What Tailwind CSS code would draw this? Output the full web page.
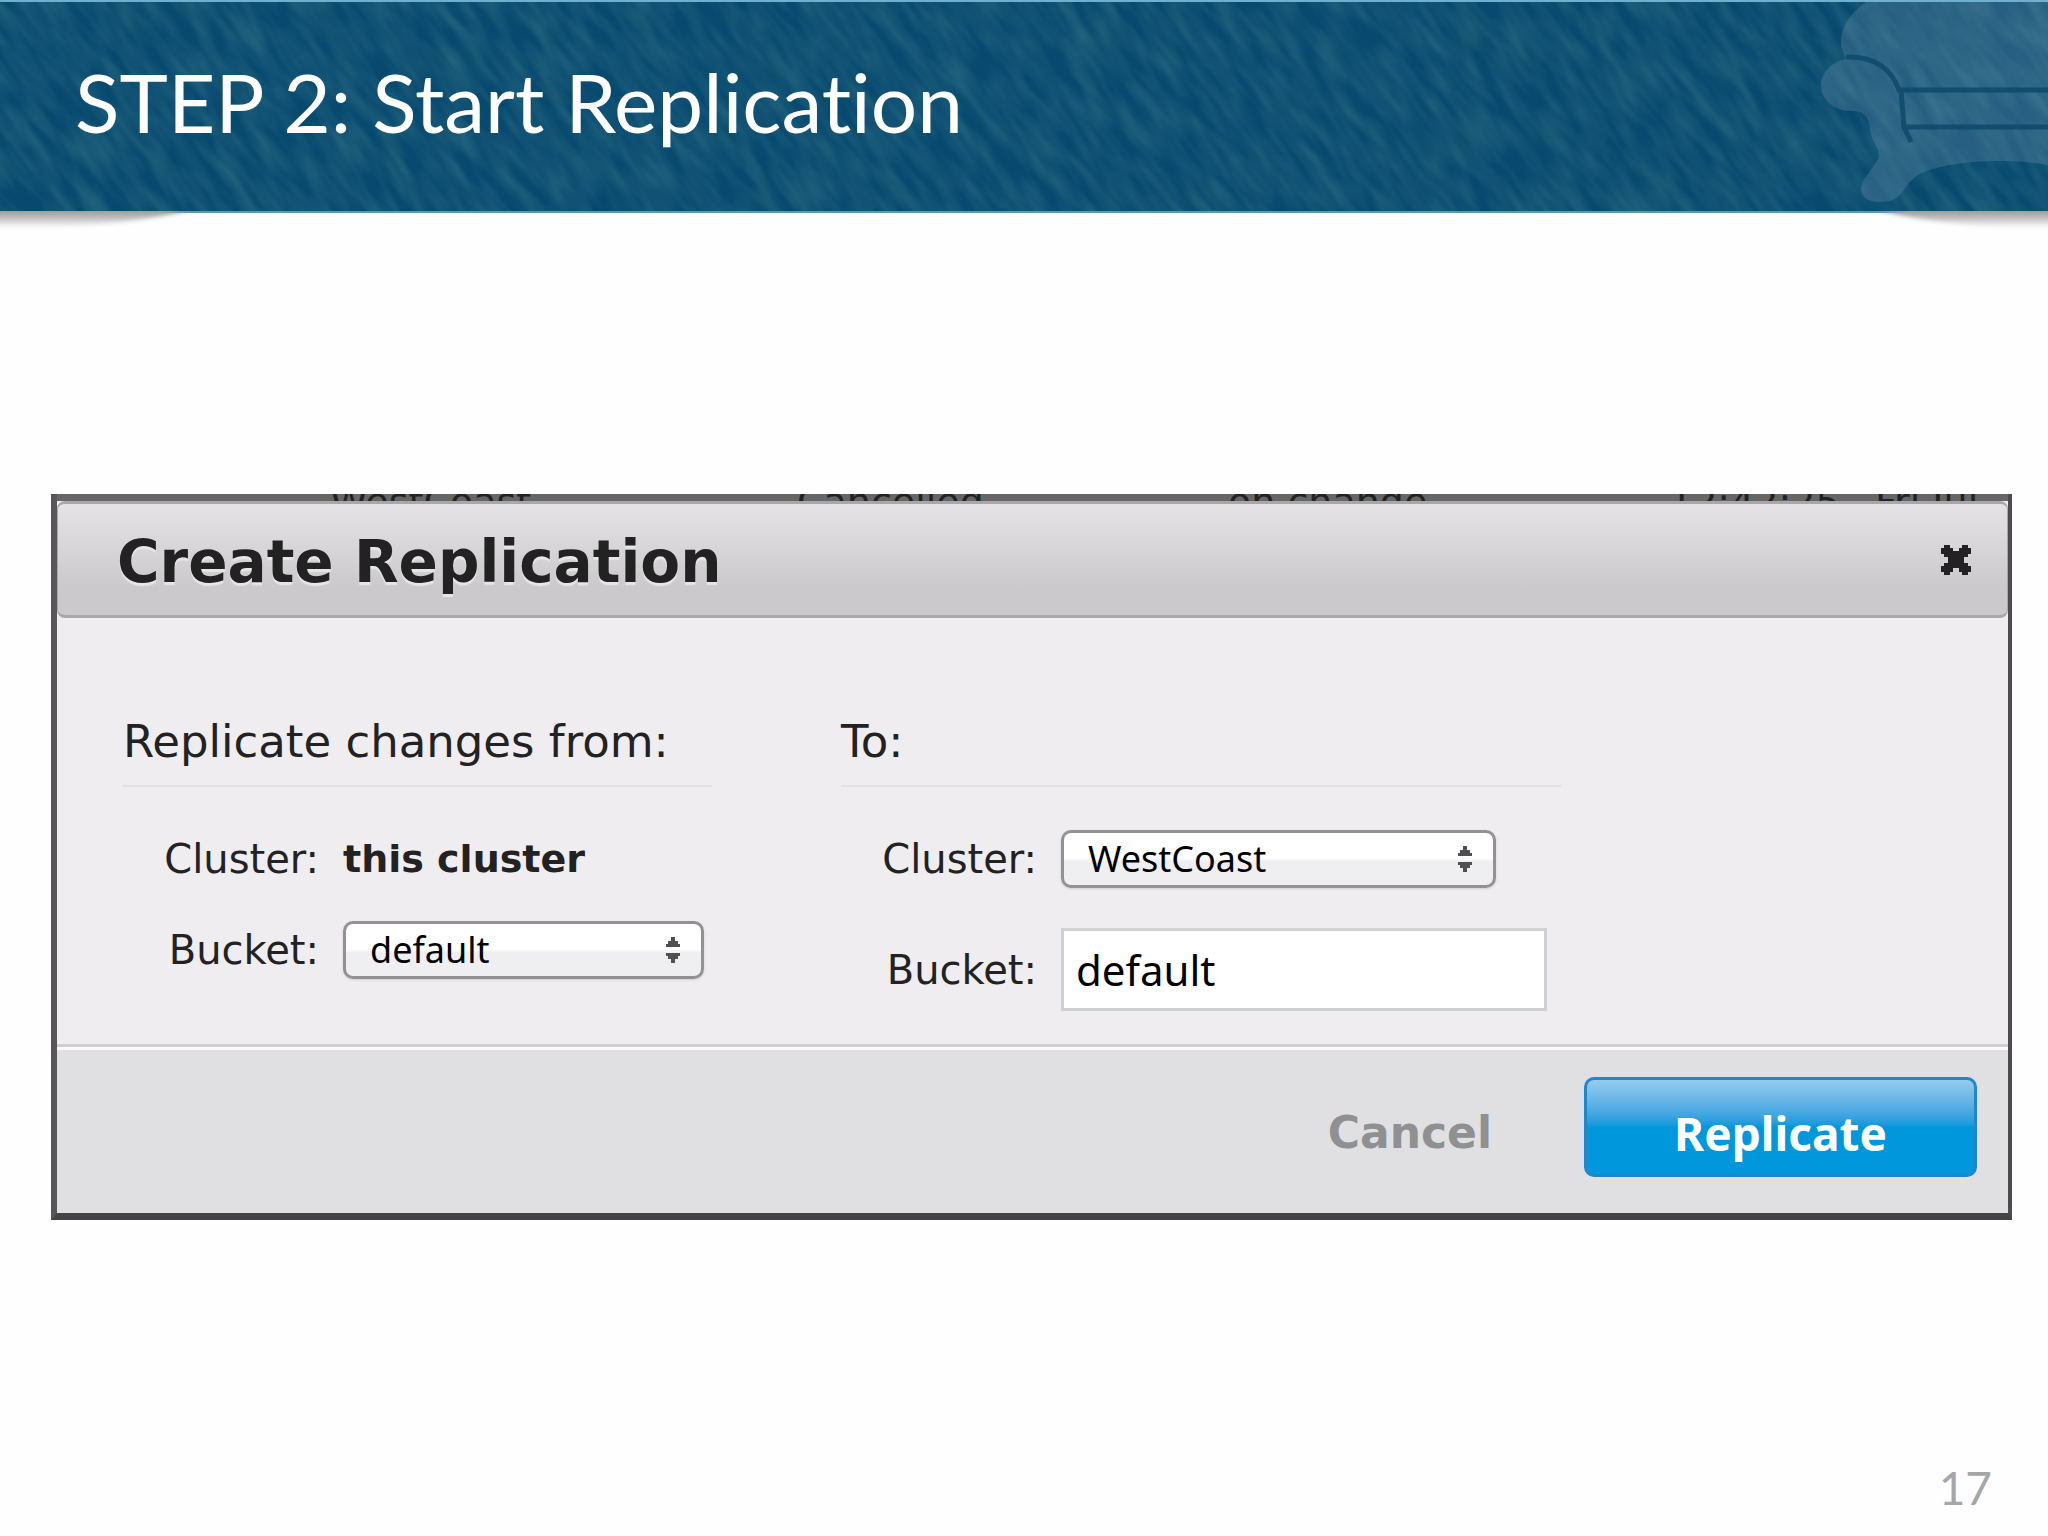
<!DOCTYPE html>
<html lang="en">

<head>
    <meta charset="UTF-8">
    <meta name="viewport" content="width=device-width, initial-scale=1.0">
    <title>STEP 2: Start Replication</title>
    <script src="https://cdn.jsdelivr.net/npm/@tailwindcss/browser@4"></script>
</head>

<body class="flex min-h-screen flex-col bg-[#fefefe] font-['DejaVu_Sans',sans-serif] text-[#222222]">

    <!-- Slide header -->
    <header class="relative flex h-[213px] items-center border-y-2 border-t-[#6fb0d0] border-b-[#5f96b0] bg-[#07496f]">
        <!-- Woven texture -->
        <svg class="absolute inset-0 h-full w-full" aria-hidden="true">
            <filter id="weave" x="0" y="0" width="100%" height="100%" color-interpolation-filters="sRGB">
                <feTurbulence type="fractalNoise" baseFrequency="0.02 0.08" numOctaves="2" seed="4" />
                <feColorMatrix values="0 0 0 0 0.15  0 0 0 0 0.40  0 0 0 0 0.50  1.4 0 0 0 -0.4" />
            </filter>
            <g transform="rotate(54)">
                <rect x="-100" y="-1700" width="1600" height="1900" filter="url(#weave)" />
            </g>
        </svg>
        <!-- Couch logo -->
        <svg class="absolute right-0 top-0 h-full w-[300px]" viewBox="0 0 300 209" preserveAspectRatio="none"
            aria-hidden="true">
            <path fill="#7f9fb8" fill-opacity=".26"
                d="M118 0C98 14 92 30 93 44L98 57C82 60 73 72 73 83C73 98 86 109 103 109C115 108 121 115 122 128C124 140 131 145 131 155C127 166 113 176 113 188C114 198 125 202 142 199C155 196 156 181 172 172C200 158 262 156 300 163V0Z" />
            <path fill="none" stroke="#0a4769" stroke-opacity=".8" stroke-width="5"
                d="M98 55C126 54 143 66 151 88H300M153 88L156 125H300M156 125L163 140" />
        </svg>
        <h1
            class="relative pb-3 pl-[75px] font-[Lato,sans-serif] text-[82px] leading-none text-white [font-variant-ligatures:none]">
            STEP 2: Start Replication</h1>
        <!-- Curled edges -->
        <svg class="absolute left-0 top-full h-6 w-[240px]" viewBox="0 0 240 24" aria-hidden="true">
            <defs>
                <linearGradient id="curl" x1="0" y1="0" x2="0" y2="1">
                    <stop offset="0" stop-color="#908b8d" />
                    <stop offset=".4" stop-color="#b4afb1" />
                    <stop offset="1" stop-color="#fefefe" />
                </linearGradient>
                <filter id="soft" x="-10%" y="-20%" width="120%" height="140%">
                    <feGaussianBlur stdDeviation="2" />
                </filter>
            </defs>
            <path fill="url(#curl)" filter="url(#soft)" d="M-20 -4H200C150 11 80 17 -20 17Z" />
        </svg>
        <svg class="absolute right-0 top-full h-6 w-[200px]" viewBox="0 0 200 24" aria-hidden="true">
            <path fill="url(#curl)" filter="url(#soft)" d="M220 -4H20C70 11 130 17 220 17Z" />
        </svg>
    </header>

    <!-- Create Replication dialog -->
    <main
        class="mt-[281px] mr-9 ml-[51px] border-r-4 border-b-[7px] border-l-[6px] border-r-[#4c4c4e] border-b-[#444446] border-l-[#58565a] bg-[#efedf0]">
        <!-- Table row behind the dialog -->
        <div
            class="grid h-[7px] grid-cols-[467fr_431fr_441fr_206fr_133fr] overflow-hidden bg-[#666666] pl-[273px] text-[38px] leading-4 whitespace-nowrap">
            <span>WestCoast</span>
            <span>Cancelled</span>
            <span>on change</span>
            <span>12:42:25</span>
            <span>Fri Jul</span>
        </div>

        <div
            class="flex h-[117px] items-center justify-between rounded-lg border-x border-y-3 border-[#a9a7aa] bg-linear-to-b from-[#e5e3e6] to-[#cbc9cc] to-75% pr-9 pl-[59px]">
            <h2 class="pt-1 text-[58px] leading-[60px] font-bold text-shadow-[0_3px_1px_#e6e6e6]">Create Replication
            </h2>
            <button type="button" aria-label="Close">
                <svg class="size-[30px]" viewBox="0 0 30 30" aria-hidden="true">
                    <path fill="#222222"
                        d="M3 0H9V3H12V6H18V3H21V0H27V3H30V9H27V12H23V18H27V21H30V27H27V30H21V27H18V23H12V27H9V30H3V27H0V21H3V18H7V12H3V9H0V3H3Z" />
                </svg>
            </button>
        </div>

        <form>
            <div class="flex gap-[129px] px-[66px] pt-[94px] pb-[33px] text-[40px] leading-[44px]">
                <section class="w-[589px]">
                    <h3 class="mb-[43px] border-b-2 border-[#dfe1e3] pb-[13px] text-[45px] leading-[60px]">Replicate
                        changes from:</h3>
                    <div class="mb-[33px] flex h-[58px] items-center gap-6">
                        <span class="w-[196px] text-right">Cluster:</span>
                        <b class="text-[38px]">this cluster</b>
                    </div>
                    <div class="flex items-center gap-6">
                        <label for="fromBucket" class="w-[196px] text-right">Bucket:</label>
                        <div class="relative">
                            <select id="fromBucket"
                                class="h-[58px] w-[361px] appearance-none rounded-[10px] border-3 border-[#929294] bg-linear-to-b from-white from-48% to-[#efeff1] to-55% pl-6 font-['Noto_Sans',sans-serif] text-[36px] leading-[48px] text-black shadow-sm">
                                <option>default</option>
                            </select>
                            <svg class="pointer-events-none absolute top-4 right-6 h-[26px] w-[14px]"
                                viewBox="0 0 14 26" fill="#505052" aria-hidden="true">
                                <path d="M5 0H9V4H12V7H14V10H0V7H2V4H5ZM0 16H14V19H12V22H9V26H5V22H2V19H0Z" />
                            </svg>
                        </div>
                    </div>
                </section>

                <section class="w-[720px]">
                    <h3 class="mb-[43px] border-b-2 border-[#dfe1e3] pb-[13px] text-[45px] leading-[60px]">To:</h3>
                    <div class="mb-10 flex items-center gap-6">
                        <label for="toCluster" class="w-[196px] text-right">Cluster:</label>
                        <div class="relative">
                            <select id="toCluster"
                                class="h-[58px] w-[435px] appearance-none rounded-[10px] border-3 border-[#929294] bg-linear-to-b from-white from-48% to-[#efeff1] to-55% pl-6 font-['Noto_Sans',sans-serif] text-[36px] leading-[48px] text-black shadow-sm">
                                <option>WestCoast</option>
                            </select>
                            <svg class="pointer-events-none absolute top-4 right-6 h-[26px] w-[14px]"
                                viewBox="0 0 14 26" fill="#505052" aria-hidden="true">
                                <path d="M5 0H9V4H12V7H14V10H0V7H2V4H5ZM0 16H14V19H12V22H9V26H5V22H2V19H0Z" />
                            </svg>
                        </div>
                    </div>
                    <div class="flex items-center gap-6">
                        <label for="toBucket" class="w-[196px] text-right">Bucket:</label>
                        <input id="toBucket" type="text" value="default"
                            class="h-[83px] w-[486px] border-3 border-[#cfd0d2] bg-white pl-3 font-['Noto_Sans',sans-serif] text-[42px] leading-[60px] text-black">
                    </div>
                </section>
            </div>

            <div
                class="flex h-[169px] items-start justify-end gap-[92px] border-t-3 border-[#cfcdd0] bg-[#e0e0e2] pr-[31px] shadow-[inset_0_3px_0_#fbf9fc]">
                <button type="button"
                    class="mt-[30px] h-[100px] pt-3 text-[44px] font-bold text-[#8f9092]">Cancel</button>
                <button type="submit"
                    class="mt-[30px] h-[100px] w-[393px] rounded-[10px] border-3 border-[#2186cb] bg-linear-to-b from-[#93cdee] to-[#0097dc] to-50% pt-3 font-['Noto_Sans',sans-serif] text-[46px] font-bold text-white">Replicate</button>
            </div>
        </form>
    </main>

    <!-- Slide number -->
    <footer class="mt-auto pr-14 pb-5 text-right font-[Lato,sans-serif] text-[46px] leading-[56px] text-[#a6a6a8]">17
    </footer>
</body>

</html>
